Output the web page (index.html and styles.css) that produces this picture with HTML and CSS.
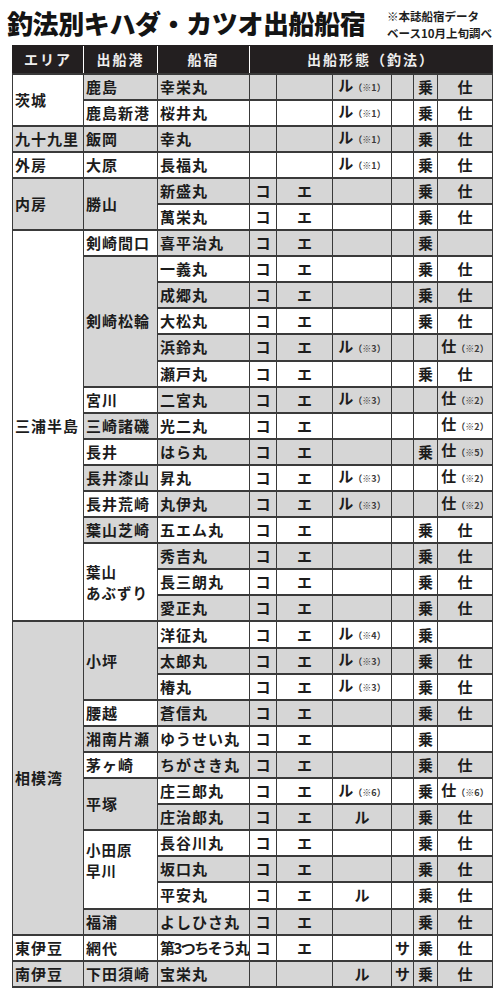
FILE: index.html
```html
<!DOCTYPE html>
<html lang="ja">
<head>
<meta charset="utf-8">
<title>釣法別キハダ・カツオ出船船宿</title>
<link rel="stylesheet" href="styles.css">
</head>
<body>
<div class="page">
  <div class="head">
    <h1 class="title">釣法別キハダ・カツオ出船船宿</h1>
    <p class="source">※本誌船宿データ<br>ベース10月上旬調べ</p>
  </div>
  <table class="tbl">
    <colgroup>
      <col class="c-area"><col class="c-port"><col class="c-ship"><col class="c-ko"><col class="c-e"><col class="c-ru"><col class="c-sa"><col class="c-jo"><col class="c-shi">
    </colgroup>
    <thead>
      <tr><th>エリア</th><th>出船港</th><th>船宿</th><th colspan="6">出船形態（釣法）</th></tr>
    </thead>
    <tbody>
      <tr class="g"><td rowspan="2" class="area w">茨城</td><td class="port g">鹿島</td><td class="ship">幸栄丸</td><td></td><td></td><td class="m">ル<span class="n">（※1）</span></td><td></td><td class="c">乗</td><td class="c">仕</td></tr>
      <tr><td class="port w">鹿島新港</td><td class="ship">桜井丸</td><td></td><td></td><td class="m">ル<span class="n">（※1）</span></td><td></td><td class="c">乗</td><td class="c">仕</td></tr>
      <tr class="g"><td class="area g">九十九里</td><td class="port g">飯岡</td><td class="ship">幸丸</td><td></td><td></td><td class="m">ル<span class="n">（※1）</span></td><td></td><td class="c">乗</td><td class="c">仕</td></tr>
      <tr><td class="area w">外房</td><td class="port w">大原</td><td class="ship">長福丸</td><td></td><td></td><td class="m">ル<span class="n">（※1）</span></td><td></td><td class="c">乗</td><td class="c">仕</td></tr>
      <tr class="g"><td rowspan="2" class="area g">内房</td><td rowspan="2" class="port g">勝山</td><td class="ship">新盛丸</td><td class="c">コ</td><td class="c">エ</td><td></td><td></td><td class="c">乗</td><td class="c">仕</td></tr>
      <tr><td class="ship">萬栄丸</td><td class="c">コ</td><td class="c">エ</td><td></td><td></td><td class="c">乗</td><td class="c">仕</td></tr>
      <tr class="g"><td rowspan="15" class="area w">三浦半島</td><td class="port w">剣崎間口</td><td class="ship">喜平治丸</td><td class="c">コ</td><td class="c">エ</td><td></td><td></td><td class="c">乗</td><td></td></tr>
      <tr><td rowspan="5" class="port g">剣崎松輪</td><td class="ship">一義丸</td><td class="c">コ</td><td class="c">エ</td><td></td><td></td><td class="c">乗</td><td class="c">仕</td></tr>
      <tr class="g"><td class="ship">成郷丸</td><td class="c">コ</td><td class="c">エ</td><td></td><td></td><td class="c">乗</td><td class="c">仕</td></tr>
      <tr><td class="ship">大松丸</td><td class="c">コ</td><td class="c">エ</td><td></td><td></td><td class="c">乗</td><td class="c">仕</td></tr>
      <tr class="g"><td class="ship">浜鈴丸</td><td class="c">コ</td><td class="c">エ</td><td class="m">ル<span class="n">（※3）</span></td><td></td><td></td><td class="m">仕<span class="n">（※2）</span></td></tr>
      <tr><td class="ship">瀬戸丸</td><td class="c">コ</td><td class="c">エ</td><td></td><td></td><td class="c">乗</td><td class="c">仕</td></tr>
      <tr class="g"><td class="port w">宮川</td><td class="ship">二宮丸</td><td class="c">コ</td><td class="c">エ</td><td class="m">ル<span class="n">（※3）</span></td><td></td><td></td><td class="m">仕<span class="n">（※2）</span></td></tr>
      <tr><td class="port g">三崎諸磯</td><td class="ship">光二丸</td><td class="c">コ</td><td class="c">エ</td><td></td><td></td><td></td><td class="m">仕<span class="n">（※2）</span></td></tr>
      <tr class="g"><td class="port w">長井</td><td class="ship">はら丸</td><td class="c">コ</td><td class="c">エ</td><td></td><td></td><td class="c">乗</td><td class="m">仕<span class="n">（※5）</span></td></tr>
      <tr><td class="port g">長井漆山</td><td class="ship">昇丸</td><td class="c">コ</td><td class="c">エ</td><td class="m">ル<span class="n">（※3）</span></td><td></td><td></td><td class="m">仕<span class="n">（※2）</span></td></tr>
      <tr class="g"><td class="port w">長井荒崎</td><td class="ship">丸伊丸</td><td class="c">コ</td><td class="c">エ</td><td class="m">ル<span class="n">（※3）</span></td><td></td><td></td><td class="m">仕<span class="n">（※2）</span></td></tr>
      <tr><td class="port g">葉山芝崎</td><td class="ship">五エム丸</td><td class="c">コ</td><td class="c">エ</td><td></td><td></td><td class="c">乗</td><td class="c">仕</td></tr>
      <tr class="g"><td rowspan="3" class="port w two">葉山<br>あぶずり</td><td class="ship">秀吉丸</td><td class="c">コ</td><td class="c">エ</td><td></td><td></td><td class="c">乗</td><td class="c">仕</td></tr>
      <tr><td class="ship">長三朗丸</td><td class="c">コ</td><td class="c">エ</td><td></td><td></td><td class="c">乗</td><td class="c">仕</td></tr>
      <tr class="g"><td class="ship">愛正丸</td><td class="c">コ</td><td class="c">エ</td><td></td><td></td><td class="c">乗</td><td class="c">仕</td></tr>
      <tr><td rowspan="12" class="area g">相模湾</td><td rowspan="3" class="port g">小坪</td><td class="ship">洋征丸</td><td class="c">コ</td><td class="c">エ</td><td class="m">ル<span class="n">（※4）</span></td><td></td><td class="c">乗</td><td></td></tr>
      <tr class="g"><td class="ship">太郎丸</td><td class="c">コ</td><td class="c">エ</td><td class="m">ル<span class="n">（※3）</span></td><td></td><td class="c">乗</td><td class="c">仕</td></tr>
      <tr><td class="ship">椿丸</td><td class="c">コ</td><td class="c">エ</td><td class="m">ル<span class="n">（※3）</span></td><td></td><td class="c">乗</td><td class="c">仕</td></tr>
      <tr class="g"><td class="port w">腰越</td><td class="ship">蒼信丸</td><td class="c">コ</td><td class="c">エ</td><td></td><td></td><td class="c">乗</td><td class="c">仕</td></tr>
      <tr><td class="port g">湘南片瀬</td><td class="ship">ゆうせい丸</td><td class="c">コ</td><td class="c">エ</td><td></td><td></td><td class="c">乗</td><td></td></tr>
      <tr class="g"><td class="port w">茅ヶ崎</td><td class="ship">ちがさき丸</td><td class="c">コ</td><td class="c">エ</td><td></td><td></td><td class="c">乗</td><td class="c">仕</td></tr>
      <tr><td rowspan="2" class="port g">平塚</td><td class="ship">庄三郎丸</td><td class="c">コ</td><td class="c">エ</td><td class="m">ル<span class="n">（※6）</span></td><td></td><td class="c">乗</td><td class="m">仕<span class="n">（※6）</span></td></tr>
      <tr class="g"><td class="ship">庄治郎丸</td><td class="c">コ</td><td class="c">エ</td><td class="c">ル</td><td></td><td class="c">乗</td><td class="c">仕</td></tr>
      <tr><td rowspan="3" class="port w two hi">小田原<br>早川</td><td class="ship">長谷川丸</td><td class="c">コ</td><td class="c">エ</td><td></td><td></td><td class="c">乗</td><td class="c">仕</td></tr>
      <tr class="g"><td class="ship">坂口丸</td><td class="c">コ</td><td class="c">エ</td><td></td><td></td><td class="c">乗</td><td class="c">仕</td></tr>
      <tr><td class="ship">平安丸</td><td class="c">コ</td><td class="c">エ</td><td class="c">ル</td><td></td><td class="c">乗</td><td class="c">仕</td></tr>
      <tr class="g"><td class="port g">福浦</td><td class="ship">よしひさ丸</td><td class="c">コ</td><td class="c">エ</td><td></td><td></td><td class="c">乗</td><td class="c">仕</td></tr>
      <tr><td class="area w">東伊豆</td><td class="port w">網代</td><td class="ship narrow">第3つちそう丸</td><td class="c">コ</td><td class="c">エ</td><td></td><td class="c">サ</td><td class="c">乗</td><td class="c">仕</td></tr>
      <tr class="g"><td class="area g">南伊豆</td><td class="port g">下田須崎</td><td class="ship">宝栄丸</td><td></td><td></td><td class="c">ル</td><td class="c">サ</td><td class="c">乗</td><td class="c">仕</td></tr>
    </tbody>
  </table>
</div>
</body>
</html>
```
FILE: styles.css
```css
html, body {
  margin: 0;
  padding: 0;
  background: #ffffff;
}
body {
  font-family: "Noto Sans CJK JP", "Noto Sans", sans-serif;
  color: #1c1c1c;
  width: 500px;
}
.page {
  padding: 0 8px 0 12px;
}
.head {
  display: flex;
  align-items: flex-start;
  justify-content: space-between;
  height: 45px;
  margin-left: -5px;
}
.title {
  margin: 8px 0 0 0;
  font-size: 26px;
  line-height: 30px;
  font-weight: 900;
  letter-spacing: -0.4px;
  color: #141414;
}
.source {
  margin: 8px 0 0 0;
  font-size: 11.5px;
  line-height: 17px;
  font-weight: 700;
  letter-spacing: 0;
  color: #1e1e1e;
  white-space: nowrap;
}
.tbl {
  width: 480px;
  border-collapse: collapse;
  table-layout: fixed;
  border: 1.5px solid #2e2e2e;
}
.c-area { width: 71px; }
.c-port { width: 74px; }
.c-ship { width: 92px; }
.c-ko { width: 27px; }
.c-e { width: 56px; }
.c-ru { width: 59px; }
.c-sa { width: 22px; }
.c-jo { width: 24px; }
.c-shi { width: 55px; }
thead tr {
  height: 28px;
  background: #231f20;
}
th {
  color: #eeeeee;
  font-size: 14px;
  font-weight: 700;
  letter-spacing: 2px;
  padding: 0;
  text-align: center;
  border-left: 1.5px solid #ffffff;
  border-top: 1.5px solid #231f20;
  border-bottom: 1.5px solid #231f20;
}
th:first-child {
  border-left: 1.5px solid #231f20;
}
tbody tr {
  height: 26.1px;
}
tbody tr.g {
  background: #d6d6d6;
}
td {
  padding: 0;
  border: 1.5px solid #3a3a3a;
  border-top-width: 2px;
  border-bottom-width: 2px;
  font-size: 15px;
  line-height: 18px;
  font-weight: 700;
  white-space: nowrap;
  overflow: hidden;
  vertical-align: middle;
}
td.w { background: #ffffff; }
td.g { background: #d6d6d6; }
.area, .port, .ship {
  text-align: left;
  padding-left: 2px;
  letter-spacing: 1px;
}
.ship.narrow {
  letter-spacing: -1.5px;
}
td.two {
  font-size: 14.5px;
  line-height: 21.5px;
}
td.hi {
  padding-bottom: 18px;
}
.c {
  text-align: center;
}
.m {
  text-align: center;
  letter-spacing: 0;
}
.n {
  font-size: 9px;
  font-weight: 700;
  letter-spacing: 0;
  color: #3a3a3a;
}
```
